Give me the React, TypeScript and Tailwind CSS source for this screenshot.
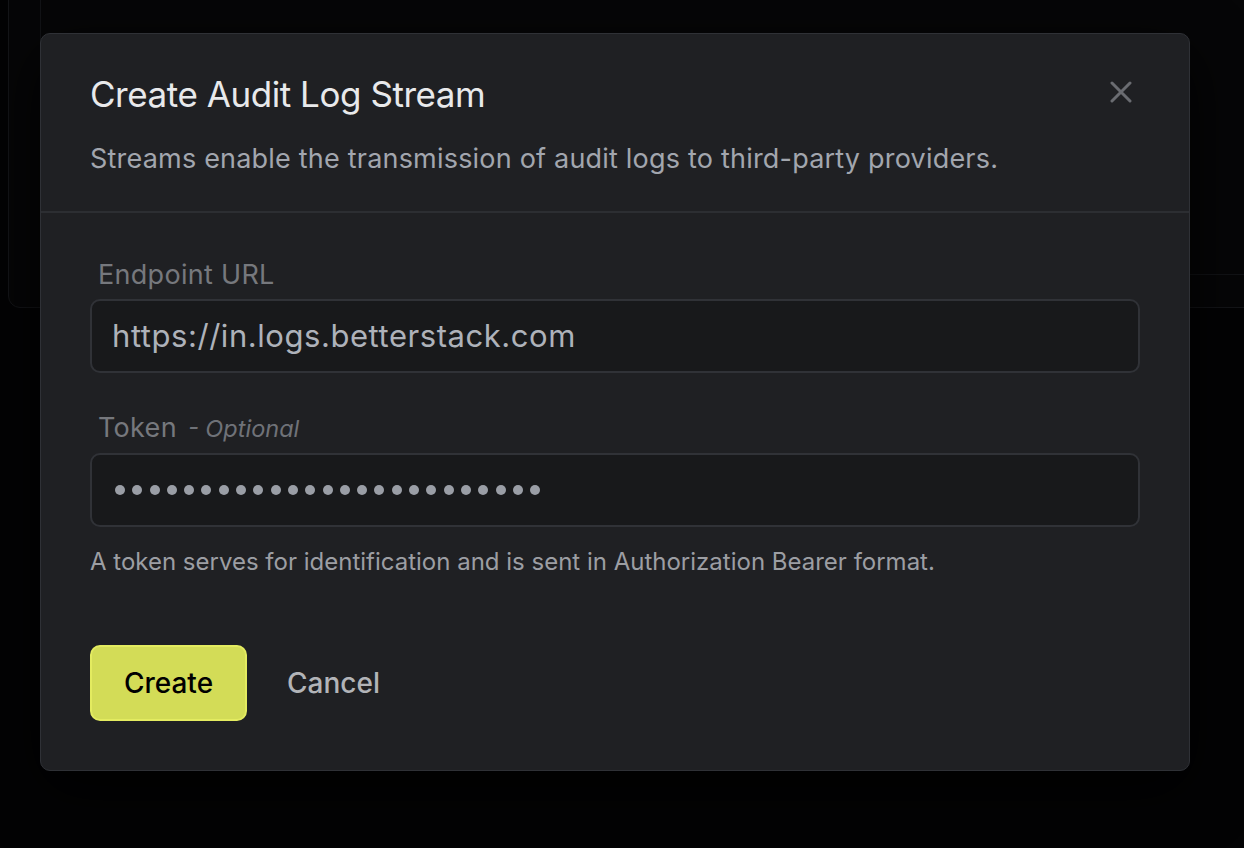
import React from "react";

export default function App() {
  const font = { fontFamily: "Inter, 'Noto Sans', sans-serif" };
  return (
    <div className="relative w-[1244px] h-[848px] overflow-hidden bg-[#030304]" style={font}>
      {/* background page card */}
      <div className="absolute left-[8px] top-[-40px] w-[1300px] h-[348px] rounded-[12px] border border-[#141518] bg-[#060607]">
        <div className="ml-[31px] h-[314px] rounded-[12px] border border-[#121316] bg-[#060607]" />
      </div>

      {/* modal */}
      <div className="absolute left-[40px] top-[33px] w-[1150px] rounded-[10px] border border-[#2f3136] bg-[#1f2023] shadow-[0_20px_60px_rgba(0,0,0,0.9)]">
        <div className="relative px-[49px] pt-[40px] pb-[36px] border-b-2 border-[#2c2e32]">
          <h2 className="text-[35px] leading-[40px] text-[#e8e9eb] font-normal tracking-[-0.45px]">Create Audit Log Stream</h2>
          <p className="mt-[29px] text-[27px] leading-[32px] text-[#a2a6ae] tracking-[0.2px]">
            Streams enable the transmission of audit logs to third-party providers.
          </p>
          <button className="absolute right-[56px] top-[46px] w-[24px] h-[24px] flex items-center justify-center">
            <svg width="22" height="22" viewBox="0 0 22 22" fill="none" stroke="#6a6c71" strokeWidth="3" strokeLinecap="round">
              <path d="M2 2 L20 20 M20 2 L2 20" />
            </svg>
          </button>
        </div>

        <div className="px-[49px] pt-[46px] pb-[49px]">
          <label className="block pl-[8px] text-[27px] leading-[32px] text-[#76787d] tracking-[0.3px]">Endpoint URL</label>
          <div className="mt-[8px] h-[74px] rounded-[10px] border-2 border-[#303237] bg-[#18191b] flex items-center px-[20px]">
            <span className="text-[31px] leading-[40px] text-[#aeb2ba] tracking-[0.55px]">https://in.logs.betterstack.com</span>
          </div>

          <label className="mt-[39px] flex items-baseline h-[32px] pl-[8px] text-[27px] leading-[32px] text-[#76787d] tracking-[0.3px]">
            <span>Token</span>
            <span className="ml-[11px] italic text-[23.5px] leading-[32px] text-[#6f7278] tracking-[0px]">- Optional</span>
          </label>
          <div className="mt-[9px] h-[74px] rounded-[10px] border-2 border-[#303237] bg-[#18191b] flex items-center px-[23px] gap-[7.3px]">
            {Array.from({ length: 25 }).map((_, i) => (
              <span key={i} className="w-[10px] h-[10px] shrink-0 rounded-full bg-[#9a9ea6]" />
            ))}
          </div>

          <p className="mt-[21px] text-[24px] leading-[28px] text-[#9c9ea3]">
            A token serves for identification and is sent in Authorization Bearer format.
          </p>

          <div className="mt-[69px] flex items-center gap-[40px]">
            <button className="h-[76px] w-[157px] rounded-[10px] border-2 border-[#e3eb60] bg-[#d3dc57] text-[28px] font-medium text-black">
              Create
            </button>
            <button className="text-[28px] font-medium text-[#b2b4b8]">Cancel</button>
          </div>
        </div>
      </div>
    </div>
  );
}
